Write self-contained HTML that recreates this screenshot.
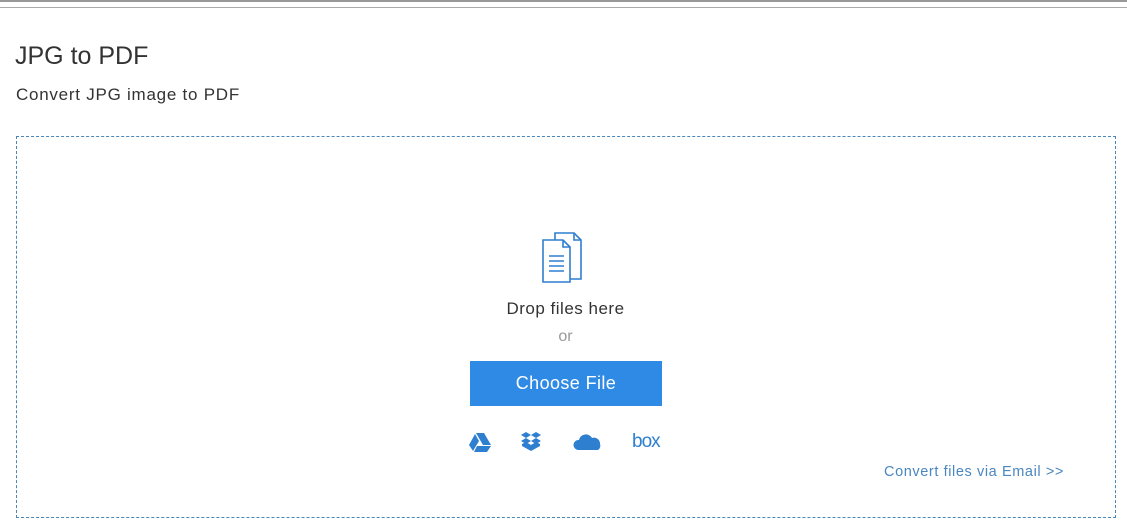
<!DOCTYPE html>
<html><head><meta charset="utf-8"><style>
body{margin:0;width:1127px;height:530px;background:#fff;font-family:"Liberation Sans",sans-serif;position:relative;overflow:hidden}
.l1{position:absolute;left:0;top:0;width:1127px;height:2px;background:#999}
.l2{position:absolute;left:0;top:7px;width:1127px;height:1px;background:#aaa}
h1{position:absolute;left:15px;top:42px;margin:0;font-weight:normal;font-size:25px;color:#333}
.sub{position:absolute;left:16px;top:85px;font-size:17px;color:#333;letter-spacing:0.75px}
.box{position:absolute;left:16px;top:136px;width:1098px;height:380px;border:1px dashed #4a86b8}
.t{position:absolute;left:0;width:1131px;text-align:center}
.btn{position:absolute;left:470px;top:361px;width:192px;height:45px;background:#2f8ae5;color:#fff;font-size:18px;text-align:center;line-height:45px;letter-spacing:0.4px}
.em{position:absolute;left:884px;top:464px;font-size:14.5px;color:#4a86c0;letter-spacing:0.6px}
</style></head><body>
<div class="l1"></div><div class="l2"></div>
<h1>JPG to PDF</h1>
<div class="sub">Convert JPG image to PDF</div>
<div class="box"></div>
<svg style="position:absolute;left:540px;top:231px" width="50" height="52" viewBox="0 0 50 52" fill="none" stroke="#2f7fd0" stroke-width="1.6">
<path d="M15 2h19l7 7v39H15z" fill="#fff"/><path d="M34 2v7h7"/>
<path d="M3 9h20l7 7v35H3z" fill="#fff"/><path d="M23 9v7h7"/>
<path d="M9 25h15M9 30h15M9 35h15M9 40h15"/>
</svg>
<div class="t" style="top:299px;font-size:17px;color:#333;letter-spacing:0.5px">Drop files here</div>
<div class="t" style="top:328px;font-size:16px;color:#999">or</div>
<div class="btn">Choose File</div>
<svg style="position:absolute;left:469px;top:432px" width="22" height="20" viewBox="0 0 22 20" fill="#2f7fd0"><path d="M7 1h8l7 12h-8z"/><path d="M6 2l4 7-6 10-4-6z"/><path d="M8 14h14l-4 6H5z"/></svg>
<svg style="position:absolute;left:520px;top:431px" width="22" height="21" viewBox="0 0 22 21" fill="#2f7fd0"><path d="M6 1l5 3-5 3-5-3zM16 1l5 3-5 3-5-3zM6 7l5 3-5 3-5-3zM16 7l5 3-5 3-5-3zM11 14l5-3 4 2v2l-9 5-9-5v-2l4-2z"/></svg>
<svg style="position:absolute;left:573px;top:433px" width="28" height="18" viewBox="0 0 28 18" fill="#2f7fd0"><path d="M5 17a5 5 0 0 1 1-10 7 7 0 0 1 13-2 6 6 0 0 1 8 6 5 5 0 0 1-2 6z"/></svg>
<div style="position:absolute;left:632px;top:431px;font-size:19px;color:#2f7fd0;letter-spacing:-1px">box</div>
<div class="em">Convert files via Email &gt;&gt;</div>
</body></html>
